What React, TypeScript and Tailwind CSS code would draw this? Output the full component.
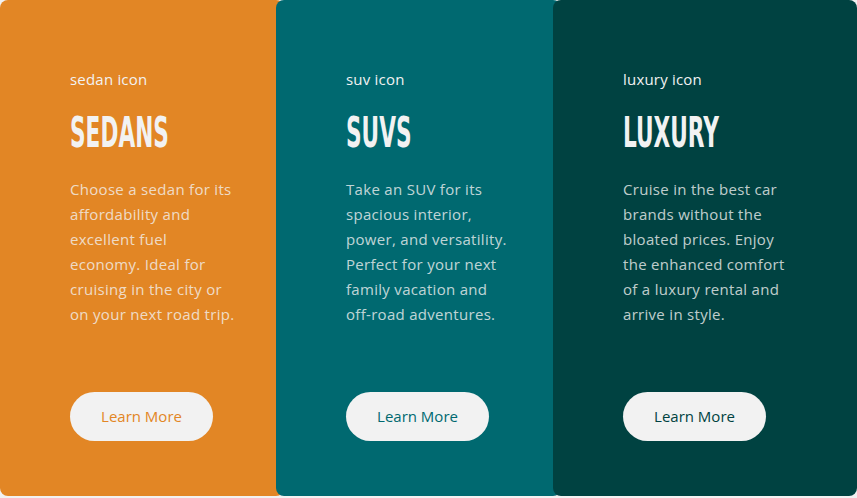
import React from 'react';

interface Card {
  icon: string;
  title: string;
  lines: string[];
  bg: string;
  btnText: string;
  wrap: string;
}

const cards: Card[] = [
  {
    icon: 'sedan icon',
    title: 'SEDANS',
    lines: ['Choose a sedan for its', 'affordability and', 'excellent fuel', 'economy. Ideal for', 'cruising in the city or', 'on your next road trip.'],
    bg: 'bg-[#e28625]',
    btnText: 'text-[#e28625]',
    wrap: 'w-[284px]',
  },
  {
    icon: 'suv icon',
    title: 'SUVS',
    lines: ['Take an SUV for its', 'spacious interior,', 'power, and versatility.', 'Perfect for your next', 'family vacation and', 'off-road adventures.'],
    bg: 'bg-[#006970]',
    btnText: 'text-[#006970]',
    wrap: 'w-[285px] -ml-2',
  },
  {
    icon: 'luxury icon',
    title: 'LUXURY',
    lines: ['Cruise in the best car', 'brands without the', 'bloated prices. Enjoy', 'the enhanced comfort', 'of a luxury rental and', 'arrive in style.'],
    bg: 'bg-[#004241]',
    btnText: 'text-[#004241]',
    wrap: 'flex-1 -ml-2',
  },
];

const body = { fontFamily: '"Open Sans", "Liberation Sans", sans-serif' };
const head = { fontFamily: '"Liberation Sans Narrow", "DejaVu Sans Condensed", "Liberation Sans", sans-serif' };

const App: React.FC = () => {
  return (
    <div className="w-full h-[498px] bg-[#f2f2f2]" style={body}>
      <div className="flex h-[496px]">
        {cards.map(card => (
          <div key={card.title} className={`${card.wrap} ${card.bg} rounded-lg pl-[70px] pt-[67px] flex flex-col`}>
            <div className="text-[15px] leading-6 text-[#f2f2f2] tracking-[0.2px]">{card.icon}</div>
            <h2 className="mt-[17px] text-[43px] leading-[48px] font-bold text-[#f2f2f2] origin-left scale-x-[0.56] whitespace-nowrap" style={head}>
              {card.title}
            </h2>
            <p className="mt-[21px] text-[15px] leading-[25px] text-[#f2f2f2]/80 tracking-[0.3px]">
              {card.lines.map(l => (
                <span key={l} className="block whitespace-nowrap">{l}</span>
              ))}
            </p>
            <button className={`mt-[65px] w-[143px] h-[49px] rounded-full bg-[#f2f2f2] text-[15px] ${card.btnText}`}>
              Learn More
            </button>
          </div>
        ))}
      </div>
    </div>
  );
};

export default App;
